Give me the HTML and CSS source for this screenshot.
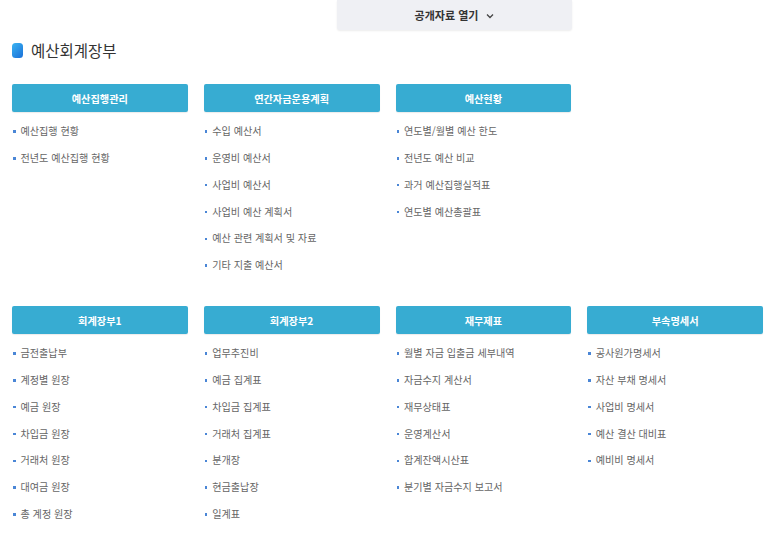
FILE: index.html
```html
<!DOCTYPE html>
<html lang="ko">
<head>
<meta charset="utf-8">
<link rel="stylesheet" href="styles.css">
</head>
<body>
<div class="topbar">
  <div class="tab">공개자료 열기 <svg class="chev" width="8" height="6" viewBox="0 0 8 6"><path d="M1 1.5 L4 4.5 L7 1.5" fill="none" stroke="#444" stroke-width="1.3"/></svg></div>
</div>
<h1 class="title"><span class="mark"></span>예산회계장부</h1>
<div class="grid">
  <section class="col">
    <div class="head">예산집행관리</div>
    <ul class="list">
      <li>예산집행 현황</li>
      <li>전년도 예산집행 현황</li>
    </ul>
  </section>
  <section class="col">
    <div class="head">연간자금운용계획</div>
    <ul class="list">
      <li>수입 예산서</li>
      <li>운영비 예산서</li>
      <li>사업비 예산서</li>
      <li>사업비 예산 계획서</li>
      <li>예산 관련 계획서 및 자료</li>
      <li>기타 지출 예산서</li>
    </ul>
  </section>
  <section class="col">
    <div class="head">예산현황</div>
    <ul class="list">
      <li>연도별/월별 예산 한도</li>
      <li>전년도 예산 비교</li>
      <li>과거 예산집행실적표</li>
      <li>연도별 예산총괄표</li>
    </ul>
  </section>
  <section class="col"></section>
  <section class="col">
    <div class="head">회계장부1</div>
    <ul class="list">
      <li>금전출납부</li>
      <li>계정별 원장</li>
      <li>예금 원장</li>
      <li>차입금 원장</li>
      <li>거래처 원장</li>
      <li>대여금 원장</li>
      <li>총 계정 원장</li>
    </ul>
  </section>
  <section class="col">
    <div class="head">회계장부2</div>
    <ul class="list">
      <li>업무추진비</li>
      <li>예금 집계표</li>
      <li>차입금 집계표</li>
      <li>거래처 집계표</li>
      <li>분개장</li>
      <li>현금출납장</li>
      <li>일계표</li>
    </ul>
  </section>
  <section class="col">
    <div class="head">재무제표</div>
    <ul class="list">
      <li>월별 자금 입출금 세부내역</li>
      <li>자금수지 계산서</li>
      <li>재무상태표</li>
      <li>운영계산서</li>
      <li>합계잔액시산표</li>
      <li>분기별 자금수지 보고서</li>
    </ul>
  </section>
  <section class="col">
    <div class="head">부속명세서</div>
    <ul class="list">
      <li>공사원가명세서</li>
      <li>자산 부채 명세서</li>
      <li>사업비 명세서</li>
      <li>예산 결산 대비표</li>
      <li>예비비 명세서</li>
    </ul>
  </section>
</div>
</body>
</html>
```
FILE: styles.css
```css
* { box-sizing: border-box; }
html, body { margin: 0; padding: 0; background: #fff; }
body {
  font-family: "Noto Sans CJK KR", "Noto Sans", sans-serif;
  color: #555;
  width: 773px;
  overflow: hidden;
}
.topbar {
  display: flex;
  padding-left: 337px;
}
.tab {
  width: 235px;
  height: 30px;
  background: #eff0f4;
  border-radius: 0 0 3px 3px;
  box-shadow: 0 1px 2px rgba(0,0,0,0.08);
  display: flex;
  align-items: center;
  justify-content: center;
  gap: 6px;
  font-size: 11px;
  font-weight: 700;
  color: #333;
}
.chev { margin-left: 2px; margin-top: 1px; }
.title {
  margin: 9px 0 0 12px;
  height: 22px;
  display: flex;
  align-items: center;
  font-size: 15.5px;
  font-weight: 400;
  color: #333;
}
.mark {
  width: 11px;
  height: 15px;
  border-radius: 3.5px;
  background: linear-gradient(135deg, #3ab4f2 0%, #1a6fd8 100%);
  margin-right: 8px;
}
.grid {
  margin: 23px 0 0 12px;
  width: 751px;
  display: grid;
  grid-template-columns: repeat(4, 1fr);
  column-gap: 16px;
  row-gap: 27px;
}
.head {
  height: 28px;
  background: #37acd2;
  border-radius: 2px;
  color: #fff;
  font-size: 10.2px;
  font-weight: 700;
  display: flex;
  align-items: center;
  justify-content: center;
  box-shadow: 0 1px 1px rgba(0,0,0,0.08);
}
.list {
  list-style: none;
  margin: 0;
  padding: 6px 0 0 0;
}
.list li {
  height: 26.85px;
  line-height: 26.85px;
  font-size: 10.1px;
  color: #666;
  display: flex;
  align-items: center;
  padding-left: 1px;
}
.list li::before {
  content: "";
  width: 2.5px;
  height: 2.5px;
  background: #4a86d6;
  margin-right: 5px;
  flex: none;
}
```
